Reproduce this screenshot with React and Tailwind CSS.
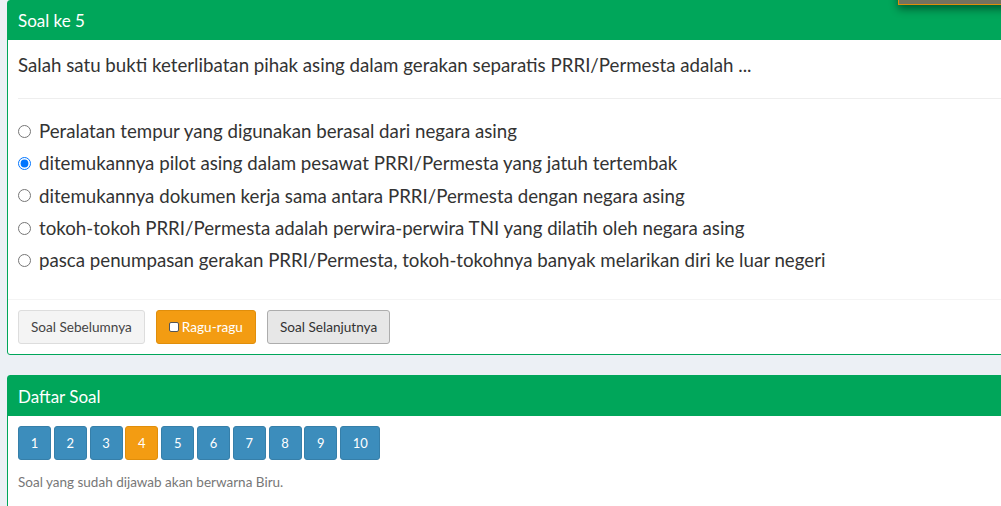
import React from "react";

const options = [
  "Peralatan tempur yang digunakan berasal dari negara asing",
  "ditemukannya pilot asing dalam pesawat PRRI/Permesta yang jatuh tertembak",
  "ditemukannya dokumen kerja sama antara PRRI/Permesta dengan negara asing",
  "tokoh-tokoh PRRI/Permesta adalah perwira-perwira TNI yang dilatih oleh negara asing",
  "pasca penumpasan gerakan PRRI/Permesta, tokoh-tokohnya banyak melarikan diri ke luar negeri",
];

const numbers = [1, 2, 3, 4, 5, 6, 7, 8, 9, 10];

const App = () => {
  return (
    <div
      className="relative w-[1001px] h-[506px] overflow-hidden bg-[#ecf0f5] pl-[7px] text-[#333]"
      style={{ fontFamily: "Lato, 'Liberation Sans', sans-serif" }}
    >
      {/* dropdown peeking from the top bar */}
      <div className="absolute left-[898px] top-[-20px] w-[130px] h-[25px] bg-[#77725f] border border-[#e08e0b] shadow-[0_4px_8px_rgba(0,0,0,0.45)] z-10"></div>

      <div className="w-[1010px] bg-white border border-[#00a65a] rounded-[3px]">
        <div className="h-[39px] bg-[#00a65a] text-white text-[17px] px-[10px] flex items-center">
          Soal ke 5
        </div>
        <div className="px-[10px] pt-[12px]">
          <p className="text-[18.7px] leading-[26px]">
            Salah satu bukti keterlibatan pihak asing dalam gerakan separatis PRRI/Permesta adalah ...
          </p>
          <div className="mt-[20px] border-t border-[#eee]"></div>
          <div className="pt-[16px] pb-[23px]">
            {options.map((opt, i) => (
              <label key={i} className="flex items-center h-[32.3px] text-[18.7px]">
                <input
                  type="radio"
                  name="jawaban"
                  defaultChecked={i === 1}
                  className="w-[13px] h-[13px] m-0 mr-[8px]"
                />
                {opt}
              </label>
            ))}
          </div>
        </div>
        <div className="border-t border-[#f4f4f4] p-[10px] flex gap-[11px]">
          <button className="h-[34px] px-[12px] text-[13.6px] bg-[#f4f4f4] border border-[#ddd] rounded-[3px] text-[#444]">
            Soal Sebelumnya
          </button>
          <button className="h-[34px] px-[12px] text-[13.6px] bg-[#f39c12] border border-[#e08e0b] rounded-[3px] text-white flex items-center">
            <span className="inline-block w-[10px] h-[10px] bg-white border border-[#555] rounded-[2px] mr-[3px]"></span>
            Ragu-ragu
          </button>
          <button className="h-[34px] px-[12px] text-[13.6px] bg-[#e7e7e7] border border-[#adadad] rounded-[3px] text-[#333]">
            Soal Selanjutnya
          </button>
        </div>
      </div>

      <div className="mt-[20px] w-[1010px] h-[200px] bg-white border border-[#00a65a] rounded-[3px]">
        <div className="h-[40px] bg-[#00a65a] text-white text-[17px] px-[10px] flex items-center">
          Daftar Soal
        </div>
        <div className="p-[10px]">
          <div className="flex gap-[2.8px]">
            {numbers.map((n) => (
              <button
                key={n}
                className={
                  n === 4
                    ? "h-[34px] w-[33px] text-[13px] text-white bg-[#f39c12] border border-[#e08e0b] rounded-[3px]"
                    : n === 10
                    ? "h-[34px] w-[40px] text-[13px] text-white bg-[#3c8dbc] border border-[#367fa9] rounded-[3px]"
                    : "h-[34px] w-[33px] text-[13px] text-white bg-[#3c8dbc] border border-[#367fa9] rounded-[3px]"
                }
              >
                {n}
              </button>
            ))}
          </div>
          <p className="mt-[12px] text-[13.5px] text-[#777]">
            Soal yang sudah dijawab akan berwarna Biru.
          </p>
        </div>
      </div>
    </div>
  );
};

export default App;
